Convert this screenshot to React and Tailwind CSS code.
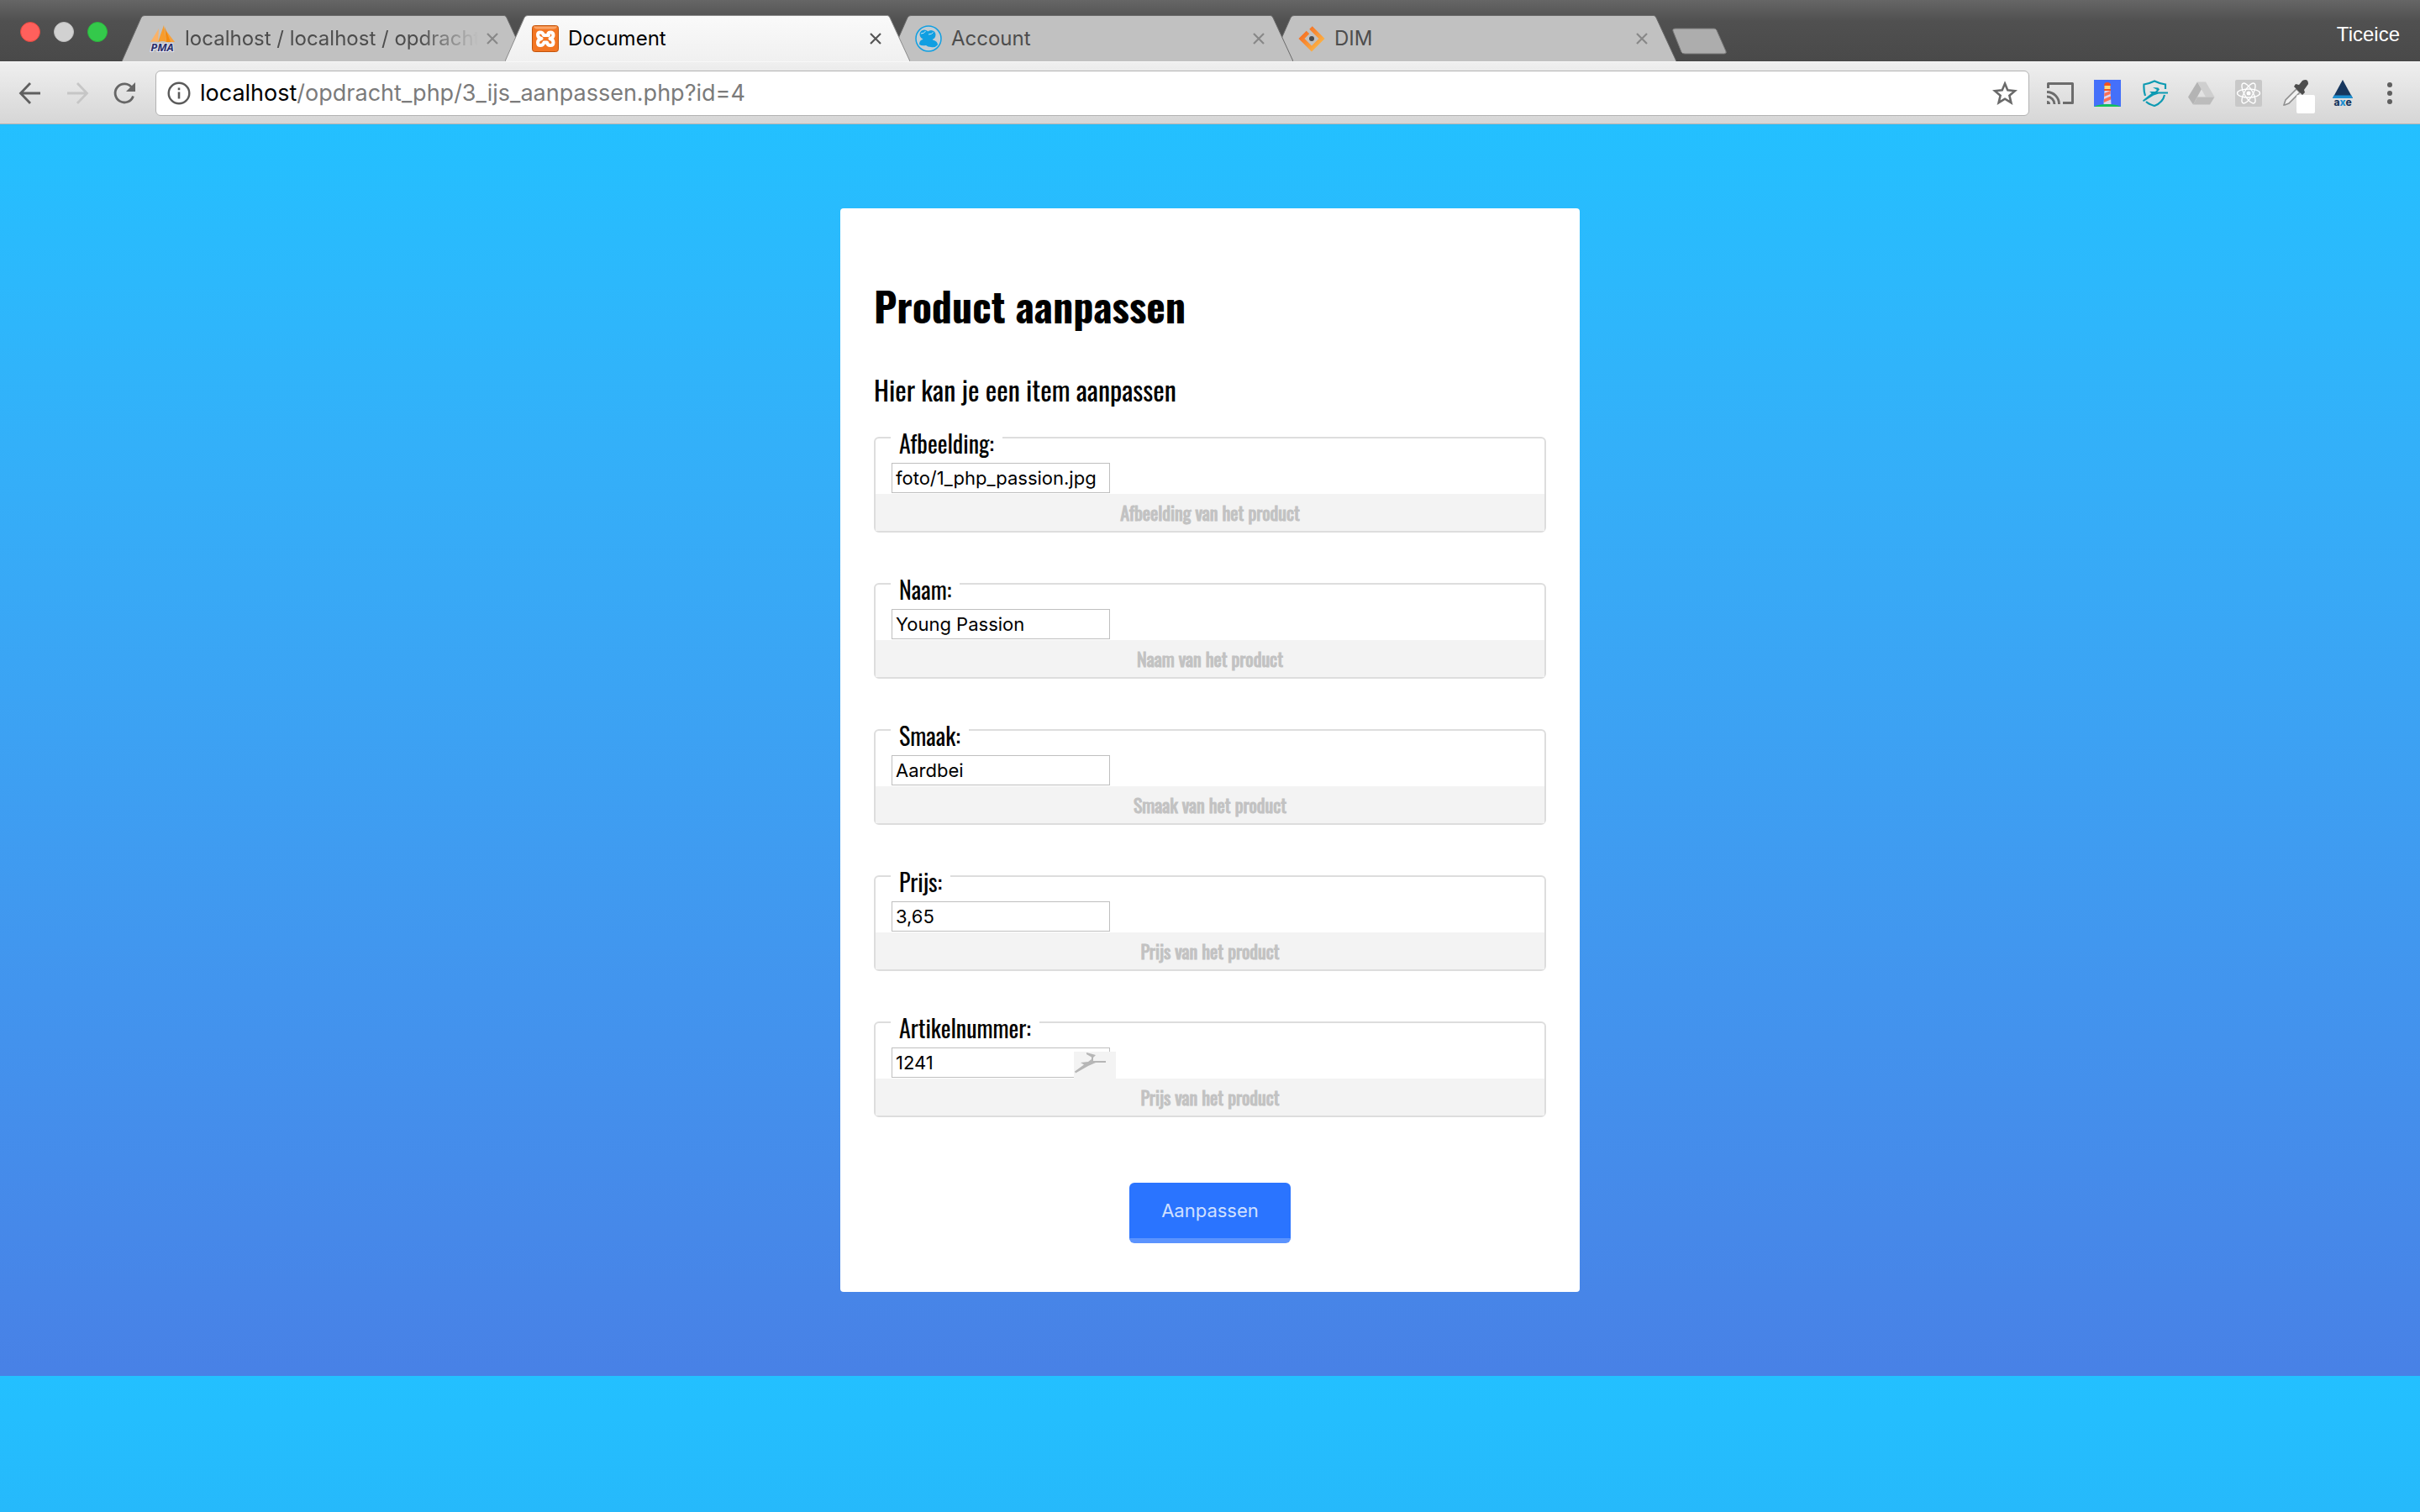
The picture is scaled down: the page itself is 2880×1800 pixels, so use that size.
import React from "react";

const ui = "font-['Inter',sans-serif]";
const osw = "font-['Oswald','Liberation_Sans_Narrow','Liberation_Sans',sans-serif]";

function Pma() {
  return (
    <svg viewBox="0 0 32 32" className="size-8 shrink-0 overflow-visible">
      <path d="M12 4 L2 20 Q7 19 11 20 Z" fill="#fbb267" />
      <path d="M18 0 L11 20 Q17 18 21 20 Z" fill="#f89c2c" />
      <path d="M21 7 L31 20 L23 20 Z" fill="#f7a13c" />
      <path d="M19 2 L26 20 L21 20 Z" fill="#f58a0c" />
      <text x="16" y="31" textAnchor="middle" fontSize="13" fontWeight="700" fontStyle="italic" fill="#2c2f6b" stroke="#e4e4ee" strokeWidth="2" paintOrder="stroke" fontFamily="Open Sans, sans-serif">PMA</text>
    </svg>
  );
}

function Xampp() {
  return (
    <svg viewBox="0 0 32 32" className="size-8 shrink-0">
      <rect x="0.5" y="0.5" width="31" height="31" rx="3" fill="#f37623" stroke="#c2540c" />
      <path d="M2 1.500 H30 Q29 4.500 26 4.500 H6 Q3 4.500 2 1.500" fill="#f9a56a" />
      <path d="M11.500 16 Q7 15 7 11.500 Q7 8.500 10 8.500 Q13 8.500 14 12 H20 Q18 8.500 22 8.500 Q25.500 8.500 25.500 12 Q25.500 15 21.500 16 Q25.500 17 25.500 20.500 Q25.500 24 22 24 Q18.500 24 18 20.500 H14.500 Q13.500 24 10 24 Q7 24 7 20.500 Q7 17 11.500 16Z" fill="none" stroke="#fff" strokeWidth="4" strokeLinejoin="round" />
    </svg>
  );
}

function Account() {
  return (
    <svg viewBox="0 0 32 32" className="size-8 shrink-0">
      <circle cx="16" cy="16" r="15" fill="#c3cdd3" stroke="#109fe2" strokeWidth="1.500" />
      <circle cx="11" cy="11" r="5.500" fill="#109fe2" />
      <circle cx="19" cy="11.500" r="5.500" fill="#109fe2" />
      <path d="M5 23 Q5 18 9 17 L11 13 H20 L21 17.500 Q27 19 27 23.500 Q24 27 19 26 Q15 26 13 24 Q8 25 5 23Z" fill="#109fe2" />
      <path d="M7 10 Q11 10 12.500 7 M16 11 Q20 11 21.500 8.500" fill="none" stroke="#c9e5f3" strokeWidth="1" />
    </svg>
  );
}

function Dim() {
  return (
    <svg viewBox="0 0 32 32" className="size-8 shrink-0">
      <defs>
        <linearGradient id="dim" x1="0" y1="0" x2="1" y2="1">
          <stop offset="0" stopColor="#f4641f" />
          <stop offset="1" stopColor="#fdbd4a" />
        </linearGradient>
      </defs>
      <path d="M11.500 8.500 L4 16 L16 28 L28 16 L15 3" fill="none" stroke="url(#dim)" strokeWidth="5" />
      <circle cx="16" cy="16" r="3" fill="#4a4a4a" />
    </svg>
  );
}

function Cross({ active }) {
  return (
    <svg viewBox="0 0 14 14" className={active ? "size-[14px] text-[#555]" : "size-[14px] text-[#888]"}>
      <path d="M1 1 L13 13 M13 1 L1 13" stroke="currentColor" strokeWidth="2.200" />
    </svg>
  );
}

function Tab({ title, icon, active, fade, z }) {
  return (
    <div className={`relative flex h-[55px] w-[482px] shrink items-center -mr-[26px] pl-8 pr-[34px] ${z}`}>
      <svg viewBox="0 0 482 55" preserveAspectRatio="none" className="absolute inset-0 size-full">
        <defs>
          <linearGradient id="tabOn" x1="0" y1="0" x2="0" y2="1">
            <stop offset="0" stopColor="#fafafa" />
            <stop offset="1" stopColor="#f0f0f0" />
          </linearGradient>
        </defs>
        <path d="M0 55 L23 3 Q24 0.500 27 0.500 H455 Q457 0.500 458 3 L482 55" fill={active ? "url(#tabOn)" : "#c1c1c1"} stroke={active ? "#8a8a8a" : "#6a6a6a"} strokeWidth="1" />
      </svg>
      <button className="relative flex min-w-0 flex-1 items-center gap-[11px] text-left">
        {icon}
        <span className={`min-w-0 flex-1 whitespace-nowrap text-[24px] leading-8 ${active ? "text-black" : "text-[#4d4d4d]"} ${fade ? "mask-r-from-80%" : ""}`}>{title}</span>
      </button>
      <button aria-label={`Sluit ${title}`} className="relative ml-[10px] shrink-0"><Cross active={active} /></button>
    </div>
  );
}

function Toolbar() {
  return (
    <div className="flex h-[75px] items-center border-y border-t-[#f8f8f8] border-b-[#b4b4b4] bg-linear-to-b from-[#efefef] to-[#d6d6d6] pl-[22px] pr-5">
      <button aria-label="Terug" className="mr-7 shrink-0">
        <svg viewBox="0 0 28 28" className="size-7 text-[#5f5f5f]"><path d="M26 14 H3 M14 2 L2.500 14 L14 26" fill="none" stroke="currentColor" strokeWidth="2.800" /></svg>
      </button>
      <button aria-label="Vooruit" className="mr-7 shrink-0">
        <svg viewBox="0 0 28 28" className="size-7 text-[#c6c6c6]"><path d="M2 14 H25 M14 2 L25.500 14 L14 26" fill="none" stroke="currentColor" strokeWidth="2.800" /></svg>
      </button>
      <button aria-label="Vernieuwen" className="mr-[23px] shrink-0">
        <svg viewBox="0 0 28 28" className="size-7 text-[#666666]"><path d="M23 7.500 A11 11 0 1 0 24.500 17.500" fill="none" stroke="currentColor" strokeWidth="2.800" /><path d="M27 1 V12 H16Z" fill="currentColor" /></svg>
      </button>
      <div className="flex h-[54px] min-w-0 flex-1 items-center rounded-md border border-[#b2b2b2] bg-white pl-[13px] pr-[13px]">
        <svg viewBox="0 0 28 28" className="mr-[11px] size-7 shrink-0 text-[#5a5a5a]"><circle cx="14" cy="14" r="12.300" fill="none" stroke="currentColor" strokeWidth="2.400" /><path d="M14 12.500 V20.500 M14 7.500 V10.200" stroke="currentColor" strokeWidth="2.600" /></svg>
        <a href="#adres" className="flex-1 truncate text-[27px] leading-9 text-[#7b7b7b]"><span className="text-black">localhost</span>/opdracht_php/3_ijs_aanpassen.php?id=4</a>
        <button aria-label="Bladwijzer" className="shrink-0">
          <svg viewBox="0 0 30 30" className="size-[30px]"><path d="M15 3.500 L18.300 11.400 L27 12.200 L20.400 17.800 L22.400 26.200 L15 21.700 L7.600 26.200 L9.600 17.800 L3 12.200 L11.700 11.400Z" fill="none" stroke="#6a6a6a" strokeWidth="2.600" /></svg>
        </button>
      </div>
      <div className="ml-[21px] flex shrink-0 items-center gap-6">
        <button aria-label="Cast"><svg viewBox="0 0 32 32" className="size-8"><path d="M1.500 10 V4.500 H30.500 V27.500 H19" fill="none" stroke="#6c6c6c" strokeWidth="3" strokeLinejoin="round" /><path d="M0 25 a4 4 0 0 1 4 4 H0Z" fill="#6c6c6c" /><path d="M0 20 a9 9 0 0 1 9 9 M0 14.500 a14.500 14.500 0 0 1 14.500 14.500" fill="none" stroke="#6c6c6c" strokeWidth="2.800" /></svg></button>
        <button aria-label="Lighthouse"><svg viewBox="0 0 32 32" className="size-8"><rect width="32" height="32" fill="#4470fa" /><path d="M12 7 a4 4 0 0 1 8 0Z" fill="#f4511e" /><rect x="12.500" y="7" width="7" height="4.500" fill="#fdd87a" /><path d="M12 11 H20 V13 H12Z" fill="#f4511e" /><path d="M12.500 13 H19.500 L20.500 29 H11.500Z" fill="#dcd3ee" /><path d="M12.400 16 L19.500 13 V17 L12.200 20Z M12 23 L20 19.500 V23.500 L11.700 27Z" fill="#fb6f54" /><path d="M0 32 Q5 29 16 29 T32 32Z" fill="#12c25b" /></svg></button>
        <button aria-label="Dashlane"><svg viewBox="0 0 32 32" className="size-8"><path d="M5 19 Q3 13 3.500 5.500 Q10 4.500 16 1.500 Q22 4.500 29 5.500 V11 M6 26 Q9 29 16 31 Q26 27 28 18" fill="none" stroke="#0e9ab2" strokeWidth="2.200" /><path d="M2 24.500 L12.500 16 L10 14 H17 L19 12 L14 9 L20.500 9.500 L22 11.500 L19.500 14.500 H32 V16.500 H21 L15 18.500 L3 26Z" fill="#0e9ab2" /></svg></button>
        <button aria-label="Drive"><svg viewBox="0 0 32 32" className="size-8"><path d="M11 2.500 L16 11 L6 29.500 L0 20.500Z" fill="#b4b4b4" /><path d="M11 2.500 H21 L31.500 20.500 H21Z" fill="#cfcfcf" /><path d="M11 20.500 H31.500 L26 29.500 H6Z" fill="#bcbcbc" /></svg></button>
        <button aria-label="React"><svg viewBox="0 0 32 32" className="size-8"><rect width="32" height="32" rx="2" fill="#c8c8c8" /><g fill="none" stroke="#fff" strokeWidth="1.400"><ellipse cx="16" cy="16" rx="13.500" ry="5" /><ellipse cx="16" cy="16" rx="13.500" ry="5" transform="rotate(60 16 16)" /><ellipse cx="16" cy="16" rx="13.500" ry="5" transform="rotate(120 16 16)" /></g><circle cx="16" cy="16" r="2.500" fill="#fff" /></svg></button>
        <button aria-label="Kleurkiezer" className="size-8"><svg viewBox="0 0 40 40" className="size-10 max-w-none"><path d="M2 30 L4 24 L17 11 L21 15 L8 28 L3 30Z" fill="#f1f1f1" stroke="#8f8f8f" strokeWidth="1.600" /><path d="M14 8 L16 5 L20 6 L24 1 Q31 -2 31 5 L26 12 L27 15 L24 18Z" fill="#4c4c4c" /><rect x="17" y="18" width="22" height="22" rx="2" fill="#fff" /></svg></button>
        <button aria-label="axe"><svg viewBox="0 0 32 32" className="size-8 overflow-visible"><path d="M16 0 L28 22 H4Z" fill="#17375e" /><path d="M5.500 18.500 H26.500 L28 22 H4Z" fill="#1d8fd1" /><text x="16" y="31" textAnchor="middle" fontSize="12" fontWeight="800" fill="#17375e" fontFamily="Inter, sans-serif">a<tspan fill="#1d8fd1">x</tspan>e</text></svg></button>
        <button aria-label="Menu"><svg viewBox="0 0 32 32" className="size-8" fill="#5f5f5f"><circle cx="16" cy="6" r="3" /><circle cx="16" cy="16" r="3" /><circle cx="16" cy="26" r="3" /></svg></button>
      </div>
    </div>
  );
}

const fields = [
  { id: "afbeelding", label: "Afbeelding:", value: "foto/1_php_passion.jpg", hint: "Afbeelding van het product" },
  { id: "naam", label: "Naam:", value: "Young Passion", hint: "Naam van het product" },
  { id: "smaak", label: "Smaak:", value: "Aardbei", hint: "Smaak van het product" },
  { id: "prijs", label: "Prijs:", value: "3,65", hint: "Prijs van het product" },
  { id: "artikelnummer", label: "Artikelnummer:", value: "1241", hint: "Prijs van het product", helper: true },
];

function Field({ id, label, value, hint, helper }) {
  return (
    <div className="rounded-md border-2 border-[#dddddd]">
      <div className="pl-[18px]">
        <label htmlFor={id} className="-mt-3 block w-fit bg-white px-[10px] text-[28px] leading-[36px]">{label}</label>
        <div className={`relative mt-[5px] ml-px w-fit ${ui}`}>
          <input id={id} defaultValue={value} className="block h-9 w-[260px] border border-[#bfbfbf] bg-white px-1 text-[22px]" />
          {helper && (
            <svg viewBox="0 0 50 32" className="absolute top-[5px] left-[217px] h-8 w-[50px]">
              <rect width="50" height="32" fill="#f3f3f3" />
              <path d="M1 23.500 L12 15.500 L8 13 L17 12 L21 9 V6.500 L15 3 V1 L26 4 L23 7 V11 L38 11 V13 L26 13 L17 17 L2 25.500Z" fill="#b6b6b6" />
            </svg>
          )}
        </div>
      </div>
      <p className="mt-px bg-[#f3f3f3] text-center text-[22px] leading-[44px] text-[#c2c2c2] [-webkit-text-stroke:1px_#c2c2c2]">{hint}</p>
    </div>
  );
}

export default function App() {
  return (
    <div className={`flex min-h-screen flex-col ${ui}`}>
      <header>
        <div className="flex h-[73px] items-end bg-linear-to-b from-[#666] via-[#505050] via-35% to-[#494949]">
          <div className="flex h-[70px] w-[145px] shrink-0 items-center gap-4 pl-6">
            <button aria-label="Sluiten" className="size-6 rounded-full border border-[#e0483f] bg-[#ff605c]" />
            <button aria-label="Minimaliseren" className="size-6 rounded-full border border-[#bdbdbd] bg-[#d1d1d1]" />
            <button aria-label="Vergroten" className="size-6 rounded-full border border-[#2bb53c] bg-[#34c94b]" />
          </div>
          <nav className="isolate flex">
            <Tab title="localhost / localhost / opdracht" icon={<Pma />} fade z="z-10" />
            <Tab title="Document" icon={<Xampp />} active z="z-20" />
            <Tab title="Account" icon={<Account />} z="z-10" />
            <Tab title="DIM" icon={<Dim />} z="z-0" />
          </nav>
          <button aria-label="Nieuw tabblad" className="mb-2 ml-[21px] h-8 w-[66px]">
            <svg viewBox="0 0 66 32" className="size-full"><path d="M1 4 Q0 1 4 1 H50 Q52 1 53 3 L64 28 Q65 31 62 31 H15 Q12 31 11 29Z" fill="#adadad" stroke="#777" /></svg>
          </button>
          <button className="mr-6 mb-4 ml-auto font-['Liberation_Sans',sans-serif] text-[24px] leading-8 text-white">Ticeice</button>
        </div>
        <Toolbar />
      </header>
      <main className="bg-linear-to-b from-[#23c0ff] to-[#4881e6] py-[100px]">
        <form onSubmit={(e) => e.preventDefault()} className={`mx-auto max-w-[880px] rounded-sm bg-white px-10 pt-20 pb-[58px] text-black ${osw}`}>
          <h1 className="text-[48px] leading-[72px] font-bold">Product aanpassen</h1>
          <h2 className="mt-10 mb-8 text-[32px] leading-[48px]">Hier kan je een item aanpassen</h2>
          <div className="flex flex-col gap-[60px]">
            {fields.map((f) => <Field key={f.id} {...f} />)}
          </div>
          <button type="submit" className={`mx-auto mt-[78px] block h-[72px] w-[192px] rounded-md border-b-[6px] border-[#5b93fe] bg-[#2a74ff] text-[22px] text-[#d0e0ff] ${ui}`}>Aanpassen</button>
        </form>
      </main>
      <div className="flex-1 bg-linear-to-b from-[#23c0ff] to-[#26b9fb]" />
    </div>
  );
}
